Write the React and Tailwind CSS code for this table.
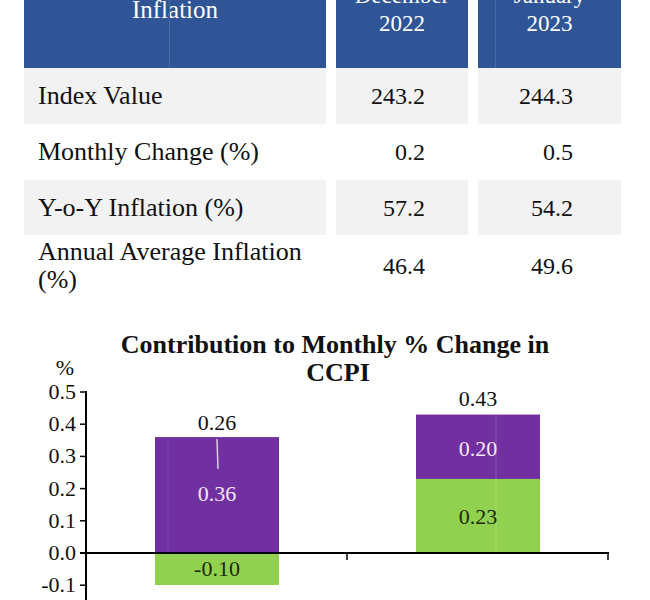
import React from 'react';

// ── Table data ────────────────────────────────────────────────────────────────
const ROWS = [
  { label: ['Index Value'], dec: '243.2', jan: '244.3', shaded: true, h: 'h-[56px]' },
  { label: ['Monthly Change (%)'], dec: '0.2', jan: '0.5', shaded: false, h: 'h-[56px]' },
  { label: ['Y-o-Y Inflation (%)'], dec: '57.2', jan: '54.2', shaded: true, h: 'h-[55px]' },
  { label: ['Annual Average Inflation', '(%)'], dec: '46.4', jan: '49.6', shaded: false, h: 'h-[62px]' },
];

const PURPLE = '#7030a0';
const GREEN = '#92d050';

// value -> page y (0.0 sits at 553, 0.1 = 32.2px)
const yOf = (v) => 553 - v * 322;

const TICKS = [0.5, 0.4, 0.3, 0.2, 0.1, 0.0, -0.1];

// ── Header cell ───────────────────────────────────────────────────────────────
function HeadCell({ lines, pad, line, size = 'text-[23px]' }) {
  return (
    <div className={`relative bg-[#2f5597] h-[108px] text-white ${size} leading-[28px] text-center ${pad}`}>
      {line && <span className={`absolute top-0 bottom-0 w-px bg-[#4a69a6] ${line}`} />}
      {lines.map((t) => <div key={t}>{t}</div>)}
    </div>
  );
}

// ── Chart ─────────────────────────────────────────────────────────────────────
function ContributionChart() {
  return (
    <svg width="650" height="290" viewBox="0 310 650 290" className="block" fontFamily="Liberation Serif, serif">
      <g fontWeight="700" fontSize="26" fill="#111" textAnchor="middle">
        <text x="335" y="353">Contribution to Monthly % Change in</text>
        <text x="338" y="381">CCPI</text>
      </g>

      <g fontSize="22" fill="#111">
        <text x="65" y="375" textAnchor="middle">%</text>
        {TICKS.map((t) => (
          <text key={t} x="76" y={yOf(t) + 7} textAnchor="end">{t.toFixed(1)}</text>
        ))}
      </g>
      {TICKS.map((t) => (
        <line key={t} x1="80" x2="86" y1={yOf(t)} y2={yOf(t)} stroke="#000" strokeWidth="1.5" />
      ))}

      {/* bar 1: Dec 2022 */}
      <rect x="155" y={yOf(0.36)} width="124" height={0.36 * 322} fill={PURPLE} />
      <rect x="155" y="553" width="124" height="32" fill={GREEN} />
      <line x1="168" x2="168" y1={yOf(0.36)} y2="553" stroke="#7d3fae" strokeWidth="1" />
      <line x1="217" x2="218" y1="439" y2="469" stroke="#d9d0e0" strokeWidth="1.5" />

      {/* bar 2: Jan 2023 */}
      <rect x="416" y={yOf(0.43)} width="124" height={0.2 * 322 + 0.5} fill={PURPLE} />
      <rect x="416" y={yOf(0.23)} width="124" height={0.23 * 322} fill={GREEN} />
      <line x1="496" x2="496" y1={yOf(0.43)} y2="553" stroke="#ffffff" strokeOpacity="0.2" strokeWidth="1" />

      {/* data labels */}
      <g fontSize="22" textAnchor="middle">
        <text x="217" y="430" fill="#111">0.26</text>
        <text x="217" y="501" fill="#f4e6f7">0.36</text>
        <text x="217" y="576" fill="#1c2a0c">-0.10</text>
        <text x="478" y="406" fill="#111">0.43</text>
        <text x="478" y="456" fill="#f4e6f7">0.20</text>
        <text x="478" y="524" fill="#1c2a0c">0.23</text>
      </g>

      {/* axes */}
      <line x1="86" x2="86" y1="391" y2="600" stroke="#000" strokeWidth="2" />
      <line x1="80" x2="609" y1="553" y2="553" stroke="#000" strokeWidth="2" />
      <line x1="347" x2="347" y1="553" y2="560" stroke="#000" strokeWidth="1.5" />
      <line x1="608" x2="608" y1="553" y2="560" stroke="#000" strokeWidth="1.5" />
    </svg>
  );
}

// ── Main ──────────────────────────────────────────────────────────────────────
export default function App() {
  return (
    <div className="w-[650px] h-[600px] overflow-hidden bg-white text-[#111] [font-family:Liberation_Serif,serif]">
      <div className="-mt-[40px]">
        <div className="ml-[24px] grid grid-cols-[302px_132px_143px] gap-x-[10px]">
          <HeadCell lines={['Inflation']} pad="pt-[36px]" line="left-[145px]" size="text-[25px]" />
          <HeadCell lines={['December', '2022']} pad="pt-[22px]" />
          <HeadCell lines={['January', '2023']} pad="pt-[22px]" line="left-[17px]" />

          {ROWS.map((r) => (
            <React.Fragment key={r.dec}>
              <div className={`${r.h} ${r.shaded ? 'bg-[#f2f2f2]' : ''} flex flex-col justify-center pl-[14px] text-[26px] leading-[28px]`}>
                {r.label.map((l) => <div key={l}>{l}</div>)}
              </div>
              <div className={`${r.h} ${r.shaded ? 'bg-[#f2f2f2]' : ''} flex items-center justify-end pr-[43px] text-[24px]`}>
                {r.dec}
              </div>
              <div className={`${r.h} ${r.shaded ? 'bg-[#f2f2f2]' : ''} flex items-center justify-end pr-[48px] text-[24px]`}>
                {r.jan}
              </div>
            </React.Fragment>
          ))}
        </div>

        <div className="mt-[13px]">
          <ContributionChart />
        </div>
      </div>
    </div>
  );
}
